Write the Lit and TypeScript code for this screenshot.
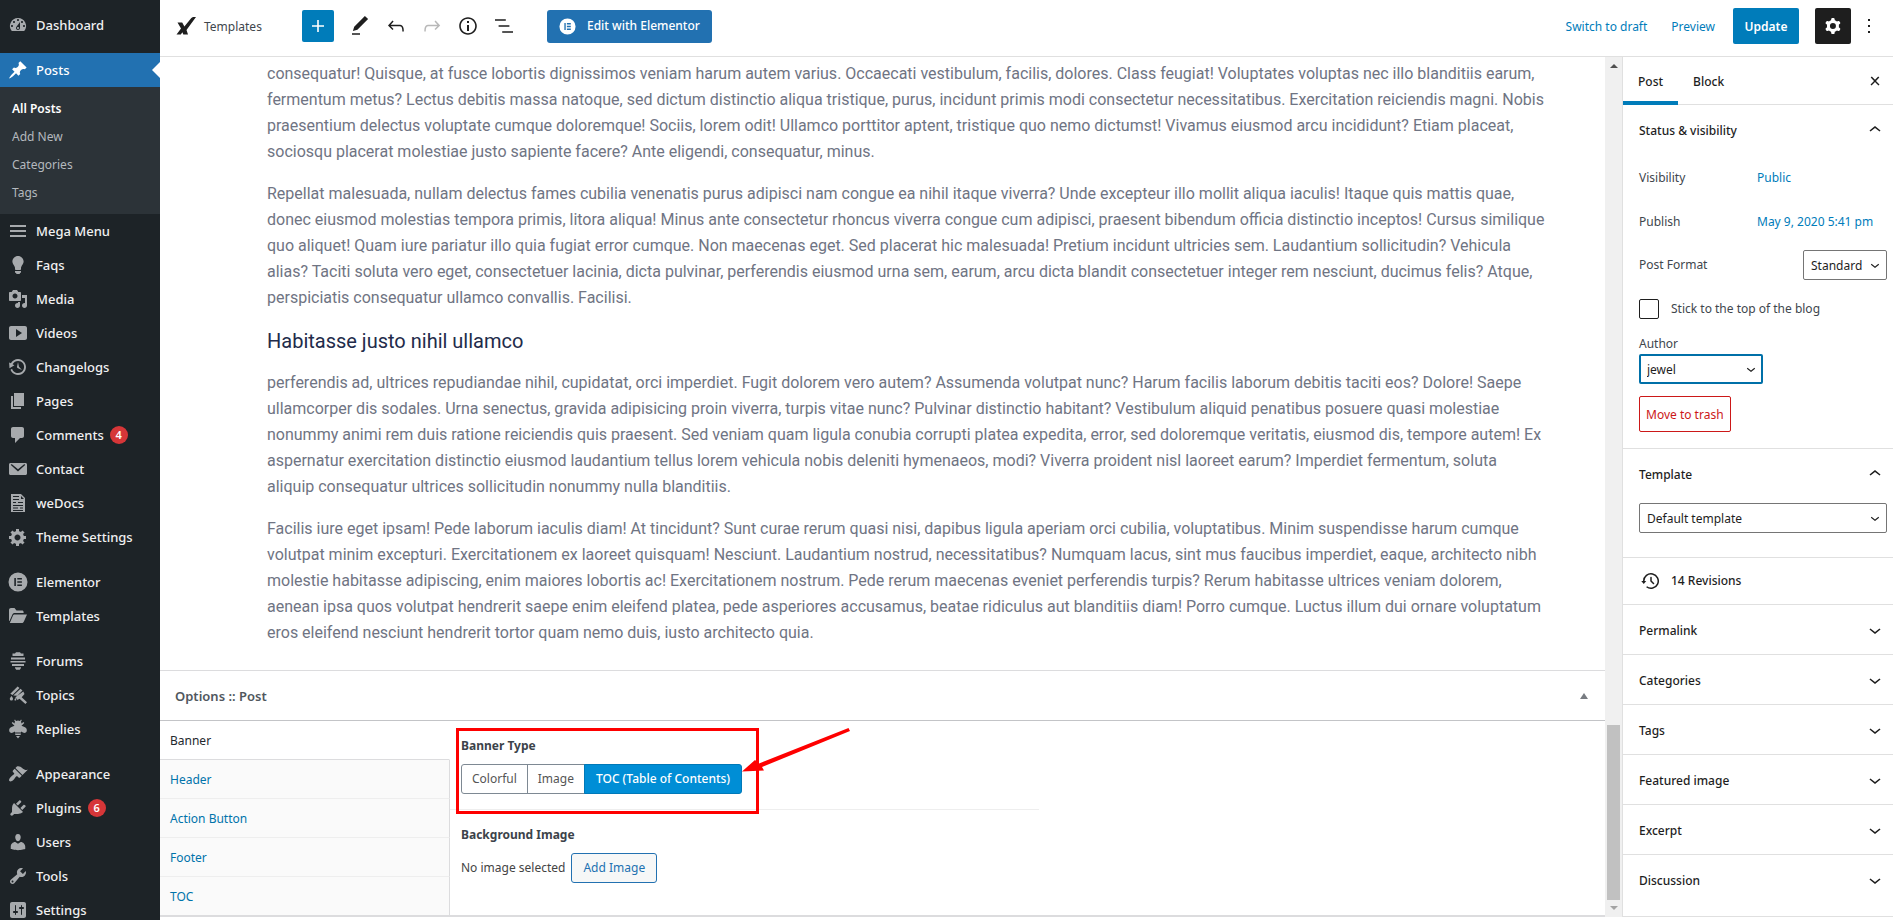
import { LitElement, html, css, svg } from "lit";
import { customElement, state } from "lit/decorators.js";
import { classMap } from "lit/directives/class-map.js";

type Item = { label: string; icon: string; badge?: number; gap?: boolean };

const DASH: Record<string, string> = {
  dashboard: "M3.76 16h12.48A7.998 7.998 0 0 0 10 3a7.998 7.998 0 0 0-6.24 13zM10 4c.55 0 1 .45 1 1s-.45 1-1 1-1-.45-1-1 .45-1 1-1zM6 6c.55 0 1 .45 1 1s-.45 1-1 1-1-.45-1-1 .45-1 1-1zm8 0c.55 0 1 .45 1 1s-.45 1-1 1-1-.45-1-1 .45-1 1-1zm-5.37 5.55L12 7v6c0 1.1-.9 2-2 2s-2-.9-2-2c0-.57.24-1.08.63-1.45zM4 10c.55 0 1 .45 1 1s-.45 1-1 1-1-.45-1-1 .45-1 1-1zm12 0c.55 0 1 .45 1 1s-.45 1-1 1-1-.45-1-1 .45-1 1-1zm-5 3c0-.55-.45-1-1-1s-1 .45-1 1 .45 1 1 1 1-.45 1-1z",
  post: "M10.44 3.02l1.82-1.82 6.36 6.35-1.83 1.82c-1.05-.68-2.48-.57-3.41.36l-.75.75c-.92.93-1.04 2.35-.35 3.41l-1.83 1.82-2.41-2.41-2.8 2.79c-.42.42-3.38 2.71-3.8 2.29s1.86-3.39 2.28-3.81l2.79-2.79L4.1 9.36l1.83-1.82c1.05.69 2.48.57 3.4-.36l.75-.75c.93-.92 1.05-2.35.36-3.41z",
  menu: "M2 4h16v2H2zM2 9h16v2H2zM2 14h16v2H2z",
  bulb: "M10 1c3.11 0 5.63 2.52 5.63 5.62 0 1.84-2.03 4.58-2.03 4.58-.33.44-.6 1.25-.6 1.8v1c0 .55-.45 1-1 1H8c-.55 0-1-.45-1-1v-1c0-.55-.27-1.36-.6-1.8 0 0-2.02-2.74-2.02-4.58C4.38 3.52 6.89 1 10 1zM7 16.87V16h6v.87c0 .62-.13 1.13-.75 1.13H12c0 .62-.4 1-1.02 1h-2c-.61 0-.98-.38-.98-1h-.25c-.62 0-.75-.51-.75-1.13z",
  media: "M13 11V4c0-.55-.45-1-1-1h-1.67L9 1H5L3.67 3H2c-.55 0-1 .45-1 1v7c0 .55.45 1 1 1h10c.55 0 1-.45 1-1zM7 4.5c1.38 0 2.5 1.12 2.5 2.5S8.38 9.5 7 9.5 4.5 8.38 4.5 7 5.62 4.5 7 4.5zM14 6h5v10.5c0 1.38-1.12 2.5-2.5 2.5S14 17.88 14 16.5s1.12-2.5 2.5-2.5c.17 0 .34.02.5.05V9h-3V6zm-4 8.05V13h2v3.5c0 1.38-1.12 2.5-2.5 2.5S7 17.88 7 16.5 8.12 14 9.5 14c.17 0 .34.02.5.05z",
  video: "M19 15V5c0-1.1-.9-2-2-2H3c-1.1 0-2 .9-2 2v10c0 1.1.9 2 2 2h14c1.1 0 2-.9 2-2zM8 14V6l6 4z",
  backup: "M13.65 2.88c3.93 2.01 5.48 6.84 3.47 10.77s-6.83 5.48-10.77 3.47c-1.87-.96-3.2-2.56-3.86-4.4l1.64-1.03c.45 1.57 1.52 2.95 3.08 3.76 3.01 1.54 6.69.35 8.23-2.66 1.55-3.01.36-6.69-2.65-8.24C9.78 3.01 6.1 4.2 4.56 7.21l1.88.97-4.95 3.08-.39-5.82 1.78.91C4.9 2.4 9.75.89 13.65 2.88zm-4.36 7.83C9.11 10.53 9 10.28 9 10c0-.07.03-.12.04-.19h-.01L10 5l.97 4.81L14 13l-4.5-2.12.02-.02c-.08-.04-.16-.09-.23-.15z",
  page: "M6 15V2h10v13H6zm-1 1h8v2H3V5h2v11z",
  comment: "M5 2h9c1.1 0 2 .9 2 2v7c0 1.1-.9 2-2 2h-2l-5 5v-5H5c-1.1 0-2-.9-2-2V4c0-1.1.9-2 2-2z",
  email: "M2.500 4h15c.83 0 1.500.67 1.500 1.500v9c0 .83-.67 1.500-1.500 1.500h-15c-.83 0-1.500-.67-1.500-1.500v-9c0-.83.67-1.500 1.500-1.500zM3.300 5.200c-.5.200-.6.700-.2 1.100l6.900 6.200 6.900-6.200c.4-.4.3-.9-.2-1.100-.3-.1-.6 0-.9.2L10 10.200 4.200 5.400c-.3-.2-.6-.3-.9-.2z",
  docs: "M3 1h10l4 4v14H3zM5 3v1h6V3zM5 6v1h6V6zM13 3v3h3zM5 9v1h3V9zM10 9v1h5V9zM5 12v1h10v-1zM5 14.500v1h5v-1zM12 14.500v1h3v-1zM5 17v1h10v-1z",
  gear: "M18 12h-2.18c-.17.7-.44 1.35-.81 1.93l1.54 1.54-2.1 2.1-1.54-1.54c-.58.36-1.23.63-1.91.79V19H8v-2.18c-.68-.16-1.33-.43-1.91-.79l-1.54 1.54-2.12-2.12 1.54-1.54c-.36-.58-.63-1.23-.79-1.91H1V9.03h2.17c.16-.7.44-1.35.8-1.94L2.43 5.55l2.1-2.1 1.54 1.54c.58-.37 1.24-.64 1.93-.81V2h3v2.18c.68.16 1.33.43 1.91.79l1.54-1.54 2.12 2.12-1.54 1.54c.36.59.64 1.24.8 1.94H18V12zm-8.5 1.500c1.66 0 3-1.34 3-3s-1.34-3-3-3-3 1.34-3 3 1.34 3 3 3z",
  elementor: "M10 .5a9.500 9.500 0 1 0 0 19 9.500 9.500 0 1 0 0-19zM6.300 6v8h1.600V6zM9.300 6v1.600h4.600V6zM9.300 9.200v1.600h4.600V9.200zM9.300 12.400V14h4.600v-1.600z",
  folder: "M1 15V4c0-1.100.9-2 2-2h3.500l2 2.500H14c1 0 1.600.6 1.600 1.500v1H7C5.400 7 4.800 7.600 4.200 9L1.500 15zM6.500 8.500H19l-3 6.700c-.5 1.100-1 1.800-2.300 1.800H1.800l3-7c.4-1 .8-1.500 1.700-1.500z",
  forums: "M7 2.500 8 1.200h4l1 1.300h2.500V5h-11V2.500zM3 6.500h14v2H3zM2.500 10h15v1.500h-15zM4 13h12v2H4zM7 16.200h6V17l-1.200 1.800H8.200L7 17z",
  topics: "M9.600 1.500 11.500 3 4.500 10 2.300 8.800zM12.500 3.800l2 1.800-5.200 5.200-4-.3zM15.300 6.600l1.200 2.400-2.800 3.200 5.300 5-1.600 1.800-5.900-5.200-2 1.200-2.200-2.800zM3.500 11c1.200 1.500 1.500 2 1.500 3a1.600 1.600 0 0 1-3.200 0c0-1 .5-1.500 1.700-3zM7.500 13c.6.900.8 1.200.8 1.700a.9.900 0 0 1-1.800 0c0-.5.300-.8 1-1.700z",
  replies: "M8 2 7 .6l-.8.700L7 2.600A3 3 0 0 0 6.700 4.500L4.500 3l-.8.900L6.500 6.800 3.500 8C1.500 8.800.8 10.500 1.300 12.200c.5 1.600 2.200 2.100 3.700 1.400l2-1v.9h6v-.9l2 1c1.500.7 3.200.2 3.700-1.400.5-1.700-.2-3.400-2.200-4.200l-3-1.200 2.800-2.900-.8-.9-2.200 1.500A3 3 0 0 0 13 2.600l.8-1.300-.8-.7L12 2a5 5 0 0 0-4 0zM7 14.500h6l-.4 1.500H7.400zM8 17h4l-2 2.500z",
  brush: "M14.48 11.06L7.41 3.99l1.500-1.500c.5-.56 2.300-.47 3.510.32 1.210.8 1.430 1.280 2.910 2.100 1.180.64 2.450 1.260 4.450.85zm-.71.71L6.700 4.700 4.930 6.470c-.39.39-.39 1.020 0 1.410l1.060 1.060c.39.39.39 1.030 0 1.420-.6.6-1.430 1.110-2.210 1.690-.35.26-.7.53-1.010.84C1.430 14.230.4 16.080 1.400 17.070c.99 1 2.840-.03 4.180-1.360.31-.31.58-.66.85-1.020.57-.78 1.080-1.610 1.690-2.210.39-.39 1.020-.39 1.410 0l1.060 1.060c.39.39 1.020.39 1.410 0z",
  plug: "M13.11 4.36L9.87 7.6 8 5.73l3.24-3.24c.35-.34 1.05-.2 1.56.32.52.51.66 1.21.31 1.55zm-8 1.77l.91-1.12 9.01 9.01-1.19.84c-.71.71-2.63 1.16-3.82 1.16H6.14L4.9 17.26c-.59.59-1.54.59-2.12 0-.59-.58-.59-1.53 0-2.12l1.24-1.24v-3.88c0-1.13.4-3.19 1.09-3.89zm7.26 3.97l3.24-3.24c.34-.35 1.04-.21 1.55.31.52.51.66 1.21.31 1.55l-3.24 3.25z",
  user: "M10 9.25c-2.27 0-2.73-3.44-2.73-3.44C7 4.02 7.82 2 9.97 2c2.16 0 2.98 2.02 2.71 3.81 0 0-.41 3.44-2.68 3.44zm0 2.57L12.72 10c2.39 0 4.52 2.33 4.52 4.53v2.49s-3.65 1.13-7.24 1.13c-3.65 0-7.24-1.13-7.24-1.13v-2.49c0-2.25 1.94-4.48 4.47-4.48z",
  wrench: "M16.68 9.77c-1.34 1.34-3.3 1.67-4.95.99l-5.41 6.52c-.99.99-2.59.99-3.58 0s-.99-2.59 0-3.57l6.52-5.42c-.68-1.65-.35-3.61.99-4.95 1.28-1.28 3.12-1.62 4.72-1.06l-2.89 2.89 2.82 2.82 2.86-2.87c.53 1.58.18 3.39-1.08 4.65zM3.81 16.21c.4.39 1.04.39 1.43 0 .4-.4.4-1.04 0-1.43-.39-.4-1.03-.4-1.43 0-.39.39-.39 1.03 0 1.43z",
  sliders: "M18 16V4c0-1.1-.9-2-2-2H4c-1.1 0-2 .9-2 2v12c0 1.1.9 2 2 2h12c1.1 0 2-.9 2-2zM8 11h1c.55 0 1 .45 1 1s-.45 1-1 1H8v1.5c0 .28-.22.5-.5.5s-.5-.22-.5-.5V13H6c-.55 0-1-.45-1-1s.45-1 1-1h1V5.5c0-.28.22-.5.5-.5s.5.22.5.5V11zm5-2h-1c-.55 0-1-.45-1-1s.45-1 1-1h1V5.5c0-.28.22-.5.5-.5s.5.22.5.5V7h1c.55 0 1 .45 1 1s-.45 1-1 1h-1v5.5c0 .28-.22.5-.5.5s-.5-.22-.5-.5V9z",
};

const EDIT: Record<string, string> = {
  plus: "M18 11.2h-5.2V6h-1.6v5.2H6v1.6h5.2V18h1.6v-5.2H18z",
  pencil: "M20.1 5.1L16.9 2 6.2 12.7l-1.3 4.4 4.5-1.3L20.1 5.1zM4 20.8h8v-1.5H4v1.5z",
  undo: "M18.3 11.7c-.6-.6-1.4-.9-2.3-.9H6.7l2.9-3.3-1.1-1-4.5 5L8.5 16l1-1-2.700-2.700H16c.5 0 .9.2 1.300.5 1 1 1 3.400 1 4.500v.3h1.500v-.2c0-1.500 0-4.300-1.500-5.700z",
  redo: "M15.6 6.5l-1.1 1 2.9 3.3H8c-.9 0-1.700.3-2.300.9-1.400 1.500-1.400 4.200-1.400 5.600v.2h1.500v-.3c0-1.100 0-3.500 1-4.500.3-.3.7-.5 1.300-.5h9.200L14.500 15l1.100 1.100 4.600-4.600-4.600-5z",
  info: "M12 3.2c-4.8 0-8.8 3.9-8.8 8.8 0 4.8 3.9 8.8 8.8 8.8 4.8 0 8.8-3.9 8.8-8.8 0-4.8-4-8.8-8.8-8.8zm0 16c-4 0-7.2-3.3-7.2-7.2C4.8 8 8 4.8 12 4.8s7.2 3.3 7.2 7.2c0 4-3.2 7.2-7.2 7.2zM11 17h2v-6h-2v6zm0-8h2V7h-2v2z",
  outline: "M13.8 5.2H3v1.5h10.8V5.2zm-3.6 12v1.5H21v-1.5H10.2zm7.2-6H6.6v1.5h10.8v-1.5z",
  cog: "M10.289 4.836A1 1 0 0111.275 4h1.306a1 1 0 01.987.836l.244 1.466c.787.26 1.503.679 2.108 1.218l1.393-.522a1 1 0 011.216.437l.653 1.13a1 1 0 01-.23 1.273l-1.148.944a6.025 6.025 0 010 2.435l1.149.946a1 1 0 01.23 1.272l-.653 1.13a1 1 0 01-1.216.437l-1.394-.522c-.605.54-1.32.958-2.108 1.218l-.244 1.466a1 1 0 01-.987.836h-1.306a1 1 0 01-.986-.836l-.244-1.466a5.995 5.995 0 01-2.108-1.218l-1.394.522a1 1 0 01-1.217-.436l-.653-1.131a1 1 0 01.23-1.272l1.149-.946a6.026 6.026 0 010-2.435l-1.148-.944a1 1 0 01-.23-1.272l.653-1.131a1 1 0 011.217-.437l1.393.522a5.994 5.994 0 012.108-1.218l.244-1.466zM14.929 12a3 3 0 11-6 0 3 3 0 016 0z",
  more: "M13 19h-2v-2h2v2zm0-6h-2v-2h2v2zm0-6h-2V5h2v2z",
  close: "M13 11.9l3.3-3.4-1.1-1-3.2 3.3-3.2-3.3-1.1 1 3.3 3.4-3.5 3.6 1 1L12 13l3.5 3.5 1-1z",
  up: "M6.5 12.4L12 8l5.5 4.4-.9 1.2L12 10l-4.5 3.6-1-1.2z",
  down: "M17.5 11.6L12 16l-5.5-4.4.9-1.2L12 14l4.5-3.6 1 1.2z",
  history: "M5.5 12h1.75l-2.5 3-2.5-3H4a8 8 0 113.134 6.35l.907-1.194A6.5 6.5 0 105.5 12zm9.53 1.97l-2.28-2.28V8.5a.75.75 0 00-1.5 0V12a.747.747 0 00.218.529l1.282-.84-1.28.842 2.5 2.5a.75.75 0 101.06-1.061z",
};

const dash = (n: string) => html`<svg class="ico20" viewBox="0 0 20 20" aria-hidden="true">${svg`<path fill-rule="evenodd" d=${DASH[n]}></path>`}</svg>`;
const edit = (n: string) => html`<svg class="ico24" viewBox="0 0 24 24" aria-hidden="true">${svg`<path fill-rule="evenodd" d=${EDIT[n]}></path>`}</svg>`;

const base = css`
  * { box-sizing: border-box; }
  svg { display: block; flex: none; fill: currentColor; }
  .ico20 { width: 20px; height: 20px; }
  .ico24 { width: 24px; height: 24px; }
  a { text-decoration: none; }
  button, select, input { font: inherit; margin: 0; }
  button { cursor: pointer; }
`;

@customElement("admin-menu")
export class AdminMenu extends LitElement {
  static styles = [base, css`
    :host { display: block; background: #1d2327; color: #f0f0f1; font-size: 13px; font-weight: 500; line-height: 18px; padding-top: 8px; overflow: hidden; }
    ul { list-style: none; margin: 0; padding: 0; }
    .gap { margin-top: 11px; }
    .item { display: flex; align-items: center; height: 34px; padding-left: 8px; gap: 8px; color: inherit; position: relative; }
    .item svg { color: #a7aaad; }
    .current { background: #2271b1; color: #fff; }
    .current svg { color: #fff; }
    .current::after { content: ""; position: absolute; right: 0; top: 9px; border: 8px solid transparent; border-right-color: #fff; border-left-width: 0; }
    .badge { background: #d63638; color: #fff; min-width: 18px; height: 18px; border-radius: 9px; font-size: 11px; font-weight: 600; text-align: center; line-height: 18px; margin-left: -2px; }
    .sub { background: #2c3338; padding: 8px 0 7px; font-size: 12px; font-weight: 400; }
    .sub a { display: block; padding: 5px 12px; color: #b4b9be; }
    .sub .on { color: #fff; font-weight: 600; }
  `];
  items: Item[] = [
    { label: "Mega Menu", icon: "menu" }, { label: "Faqs", icon: "bulb" }, { label: "Media", icon: "media" },
    { label: "Videos", icon: "video" }, { label: "Changelogs", icon: "backup" }, { label: "Pages", icon: "page" },
    { label: "Comments", icon: "comment", badge: 4 }, { label: "Contact", icon: "email" }, { label: "weDocs", icon: "docs" },
    { label: "Theme Settings", icon: "gear" }, { label: "Elementor", icon: "elementor", gap: true }, { label: "Templates", icon: "folder" },
    { label: "Forums", icon: "forums", gap: true }, { label: "Topics", icon: "topics" }, { label: "Replies", icon: "replies" },
    { label: "Appearance", icon: "brush", gap: true }, { label: "Plugins", icon: "plug", badge: 6 }, { label: "Users", icon: "user" },
    { label: "Tools", icon: "wrench" }, { label: "Settings", icon: "sliders" },
  ];
  render() {
    return html`<nav><ul>
      <li><a class="item" href="#">${dash("dashboard")}Dashboard</a></li>
      <li class="gap"><a class="item current" href="#">${dash("post")}Posts</a>
        <ul class="sub">
          ${["All Posts", "Add New", "Categories", "Tags"].map((t, i) => html`<li><a href="#" class=${classMap({ on: i === 0 })}>${t}</a></li>`)}
        </ul></li>
      ${this.items.map((i) => html`<li class=${classMap({ gap: !!i.gap })}><a class="item" href="#">${dash(i.icon)}${i.label}${i.badge ? html`<span class="badge">${i.badge}</span>` : ""}</a></li>`)}
    </ul></nav>`;
  }
}

@customElement("editor-header")
export class EditorHeader extends LitElement {
  static styles = [base, css`
    :host { display: flex; flex: none; box-sizing: border-box; align-items: center; justify-content: space-between; height: 57px; border-bottom: 1px solid #e0e0e0; padding: 0 12px 4px 14px; background: #fff; font-size: 12px; line-height: 18px; color: #1e1e1e; }
    .side, .tools { display: flex; align-items: center; }
    .logo { width: 24px; height: 24px; margin-right: 6px; }
    .name { width: 98px; padding-top: 2px; color: #40464d; }
    button { border: 0; background: none; padding: 0; color: inherit; display: flex; align-items: center; justify-content: center; border-radius: 2px; }
    .tools { gap: 12px; }
    .add { width: 32px; height: 32px; background: #007cba; color: #fff; margin-right: 2px; }
    .tool { width: 24px; height: 32px; }
    .off { color: #b8b8b8; }
    .elementor { height: 33px; background: #2271b1; color: #fff; border-radius: 3px; padding: 0 12px; gap: 11px; margin-left: 19px; font-weight: 500; }
    .elementor svg { width: 17px; height: 17px; }
    .right a { color: #007cba; padding-top: 2px; }
    .right a + a { margin-left: 24px; }
    .update { height: 36px; width: 66px; padding-top: 2px; background: #007cba; color: #fff; font-weight: 600; margin: 0 16px 0 18px; }
    .cog { width: 36px; height: 36px; background: #1e1e1e; color: #fff; margin-right: 6px; }
  `];
  render() {
    return html`
      <div class="side">
        <svg class="logo" viewBox="0 0 24 24" aria-hidden="true"><path d="M3.500 8.500h4.700l2.200 4L16.500 5c1.200-1.500 2-2 3.500-2h2L12.500 16l1.500 4.500H9.300l-.9-2.200-1.600 2.200H2.500L7 14.500z"></path></svg>
        <span class="name">Templates</span>
        <div class="tools">
          <button class="add" aria-label="Add block">${edit("plus")}</button>
          <button class="tool" aria-label="Tools">${edit("pencil")}</button>
          <button class="tool" aria-label="Undo">${edit("undo")}</button>
          <button class="tool off" aria-label="Redo">${edit("redo")}</button>
          <button class="tool" aria-label="Details">${edit("info")}</button>
          <button class="tool" aria-label="Outline">${edit("outline")}</button>
          <button class="elementor">${dash("elementor")}Edit with Elementor</button>
        </div>
      </div>
      <div class="side right">
        <a href="#">Switch to draft</a><a href="#">Preview</a>
        <button class="update">Update</button>
        <button class="cog" aria-label="Settings">${edit("cog")}</button>
        <button class="tool" aria-label="More">${edit("more")}</button>
      </div>`;
  }
}

@customElement("post-body")
export class PostBody extends LitElement {
  static styles = [base, css`
    :host { display: block; padding: 4px 58px 8px 107px; font-family: Roboto, "Liberation Sans", sans-serif; font-size: 16px; line-height: 26px; color: #6f7483; }
    p { margin: 0 0 16px; }
    h4 { margin: 0 0 15px; font-size: 20px; line-height: 28px; font-weight: 400; color: #222b4a; }
  `];
  render() {
    return html`
      <p>consequatur! Quisque, at fusce lobortis dignissimos veniam harum autem varius. Occaecati vestibulum, facilis, dolores. Class feugiat! Voluptates voluptas nec illo blanditiis earum, fermentum metus? Lectus debitis massa natoque, sed dictum distinctio aliqua tristique, purus, incidunt primis modi consectetur necessitatibus. Exercitation reiciendis magni. Nobis praesentium delectus voluptate cumque doloremque! Sociis, lorem odit! Ullamco porttitor aptent, tristique quo nemo dictumst! Vivamus eiusmod arcu incididunt? Etiam placeat, sociosqu placerat molestiae justo sapiente facere? Ante eligendi, consequatur, minus.</p>
      <p>Repellat malesuada, nullam delectus fames cubilia venenatis purus adipisci nam congue ea nihil itaque viverra? Unde excepteur illo mollit aliqua iaculis! Itaque quis mattis quae, donec eiusmod molestias tempora primis, litora aliqua! Minus ante consectetur rhoncus viverra congue cum adipisci, praesent bibendum officia distinctio inceptos! Cursus similique quo aliquet! Quam iure pariatur illo quia fugiat error cumque. Non maecenas eget. Sed placerat hic malesuada! Pretium incidunt ultricies sem. Laudantium sollicitudin? Vehicula alias? Taciti soluta vero eget, consectetuer lacinia, dicta pulvinar, perferendis eiusmod urna sem, earum, arcu dicta blandit consectetuer integer rem nesciunt, ducimus felis? Atque, perspiciatis consequatur ullamco convallis. Facilisi.</p>
      <h4>Habitasse justo nihil ullamco</h4>
      <p>perferendis ad, ultrices repudiandae nihil, cupidatat, orci imperdiet. Fugit dolorem vero autem? Assumenda volutpat nunc? Harum facilis laborum debitis taciti eos? Dolore! Saepe ullamcorper dis sodales. Urna senectus, gravida adipisicing proin viverra, turpis vitae nunc? Pulvinar distinctio habitant? Vestibulum aliquid penatibus posuere quasi molestiae nonummy animi rem duis ratione reiciendis quis praesent. Sed veniam quam ligula conubia corrupti platea expedita, error, sed doloremque veritatis, eiusmod dis, tempore autem! Ex aspernatur exercitation distinctio eiusmod laudantium tellus lorem vehicula nobis deleniti hymenaeos, modi? Viverra proident nisl laoreet earum? Imperdiet fermentum, soluta aliquip consequatur ultrices sollicitudin nonummy nulla blanditiis.</p>
      <p>Facilis iure eget ipsam! Pede laborum iaculis diam! At tincidunt? Sunt curae rerum quasi nisi, dapibus ligula aperiam orci cubilia, voluptatibus. Minim suspendisse harum cumque volutpat minim excepturi. Exercitationem ex laoreet quisquam! Nesciunt. Laudantium nostrud, necessitatibus? Numquam lacus, sint mus faucibus imperdiet, eaque, architecto nibh molestie habitasse adipiscing, enim maiores lobortis ac! Exercitationem nostrum. Pede rerum maecenas eveniet perferendis turpis? Rerum habitasse ultrices veniam dolorem, aenean ipsa quos volutpat hendrerit saepe enim eleifend platea, pede asperiores accusamus, beatae ridiculus aut blanditiis diam! Porro cumque. Luctus illum dui ornare voluptatum eros eleifend nesciunt hendrerit tortor quam nemo duis, iusto architecto quia.</p>`;
  }
}

@customElement("options-box")
export class OptionsBox extends LitElement {
  @state() banner = "TOC (Table of Contents)";
  static styles = [base, css`
    :host { display: block; font-size: 12px; line-height: 18px; color: #444; border-top: 1px solid #dcdcde; }
    .title { display: flex; align-items: center; justify-content: space-between; height: 50px; padding: 0 17px 0 15px; margin: 0; border-bottom: 1px solid #c3c4c7; font-size: 13px; font-weight: 600; color: #50575e; }
    .title button { border: 0; background: none; padding: 0; }
    .title i { display: block; border: 4px solid transparent; border-top-width: 0; border-bottom: 6px solid #787c82; }
    .panel { display: grid; grid-template-columns: 290px 1fr; border-bottom: 2px solid #dcdcde; }
    .tabs { display: grid; grid-template-rows: repeat(4, 39px) 38px; }
    .tabs a { display: flex; align-items: center; padding: 2px 0 0 10px; color: #0073aa; background: #fafafa; border-bottom: 1px solid #eee; border-right: 1px solid #dcdcde; }
    .tabs .on { background: #fff; color: #23282d; border-right-color: #fff; border-bottom-color: #dcdcde; }
    .tabs a:last-child { border-bottom: 0; }
    .fields { max-width: 589px; }
    .field { padding: 16px 11px 15px; border-bottom: 1px solid #eee; }
    .field + .field { border: 0; }
    .legend { font-weight: 700; margin: 0 0 9px; padding: 0; color: #3c434a; }
    .wrap { position: relative; width: max-content; }
    .group { display: flex; height: 30px; }
    .group label { display: flex; align-items: center; padding: 0 10px; border: 1px solid #7e8993; margin-left: -1px; color: #555; }
    .group label:first-of-type { border-radius: 3px 0 0 3px; margin-left: 0; }
    .group label:last-of-type { border-radius: 0 3px 3px 0; }
    .group .on { background: #008ed6; border-color: #0079b8; color: #fff; padding: 0 11px; font-weight: 500; }
    .group input { position: absolute; opacity: 0; }
    .row { display: flex; align-items: center; gap: 6px; }
    .addimg { height: 30px; padding: 0 11px; border: 1px solid #2271b1; border-radius: 3px; background: #f6f7f7; color: #2271b1; }
    .mark { position: absolute; left: -5px; top: -9px; right: -17px; height: 86px; border: 3px solid #fe0000; pointer-events: none; }
    .arrow { position: absolute; left: 100%; top: -9px; width: 108px; height: 50px; fill: #fe0000; pointer-events: none; }
  `];
  render() {
    return html`
      <h2 class="title">Options :: Post<button aria-label="Toggle panel"><i></i></button></h2>
      <div class="panel">
        <nav class="tabs">${["Banner", "Header", "Action Button", "Footer", "TOC"].map((t, i) => html`<a href="#" class=${classMap({ on: i === 0 })}>${t}</a>`)}</nav>
        <div class="fields">
          <div class="field"><div class="wrap">
            <p class="legend" id="bt">Banner Type</p>
            <div class="group" role="radiogroup" aria-labelledby="bt">
              ${["Colorful", "Image", "TOC (Table of Contents)"].map((t) => html`<label class=${classMap({ on: this.banner === t })}><input type="radio" name="banner" .checked=${this.banner === t} @change=${() => (this.banner = t)}>${t}</label>`)}
            </div>
            <div class="mark"></div>
            <svg class="arrow" viewBox="0 0 108 50" aria-hidden="true"><path d="M106.500 0 108 3 20 39 22 42.500 0 43.500 13 32 17 35.500z"></path></svg>
          </div></div>
          <div class="field">
            <p class="legend">Background Image</p>
            <div class="row">No image selected <button class="addimg">Add Image</button></div>
          </div>
        </div>
      </div>`;
  }
}

@customElement("settings-panel")
export class SettingsPanel extends LitElement {
  static styles = [base, css`
    :host { display: block; border-left: 1px solid #e0e0e0; border-bottom: 1px solid #e0e0e0; background: #fff; font-size: 12px; line-height: 18px; color: #1e1e1e; }
    .tabs { display: flex; height: 48px; border-bottom: 1px solid #e0e0e0; padding-right: 6px; }
    .tabs button { border: 0; background: none; padding: 2px 15px 0; height: 48px; color: inherit; font-weight: 500; }
    .tabs .on { box-shadow: inset 0 -4px #007cba; }
    .tabs .x { margin-left: auto; padding: 0; width: 24px; }
    .head { display: flex; align-items: center; justify-content: space-between; width: 100%; height: 49px; padding: 0 6px 0 16px; border: 0; background: none; color: inherit; font-weight: 500; }
    .head span { padding-top: 2px; }
    .head[aria-expanded="true"] { height: 50px; }
    .sec { border-bottom: 1px solid #e0e0e0; }
    .sec:last-child { border: 0; padding-bottom: 12px; }
    .body { padding: 0 6px 16px 16px; color: #40464d; }
    .line { display: flex; align-items: center; height: 44px; }
    .line > :first-child { width: 118px; }
    .line > a, .line > span:first-child { padding-top: 2px; }
    .line a { color: #007cba; }
    .line .sel { margin-left: auto; }
    .sel { position: relative; display: block; color: #1e1e1e; }
    .sel svg { position: absolute; right: 3px; top: 6px; width: 18px; height: 18px; pointer-events: none; }
    select { appearance: none; width: 100%; height: 30px; border: 1px solid #757575; border-radius: 2px; padding: 2px 22px 0 7px; background: #fff; color: inherit; }
    .std { width: 84px; }
    .author { width: 124px; }
    .author select { border: 2px solid #0070a8; padding-left: 6px; }
    .check { display: flex; align-items: center; gap: 12px; height: 44px; }
    .check input { appearance: none; width: 20px; height: 20px; border: 1px solid #1e1e1e; border-radius: 2px; }
    .lab { display: block; padding-top: 4px; margin-bottom: 1px; }
    .trash { height: 36px; padding: 2px 6px 0; margin-top: 12px; border: 1px solid #cc1818; border-radius: 2px; background: none; color: #cc1818; display: block; }
    .template { padding: 4px 6px 24px 16px; }
    .rev { display: flex; align-items: center; gap: 8px; height: 46px; padding-left: 16px; font-weight: 500; color: inherit; }
  `];
  head(t: string, open = false) {
    return html`<button class="head" aria-expanded=${open ? "true" : "false"}><span>${t}</span>${edit(open ? "up" : "down")}</button>`;
  }
  render() {
    return html`
      <div class="tabs"><button class="on">Post</button><button>Block</button><button class="x" aria-label="Close">${edit("close")}</button></div>
      <section class="sec">
        ${this.head("Status & visibility", true)}
        <div class="body">
          <div class="line"><span>Visibility</span><a href="#">Public</a></div>
          <div class="line"><span>Publish</span><a href="#">May 9, 2020 5:41 pm</a></div>
          <div class="line"><label for="fmt">Post Format</label><span class="sel std"><select id="fmt"><option>Standard</option></select>${edit("down")}</span></div>
          <label class="check"><input type="checkbox">Stick to the top of the blog</label>
          <label class="lab" for="auth">Author</label>
          <span class="sel author"><select id="auth"><option>jewel</option></select>${edit("down")}</span>
          <button class="trash">Move to trash</button>
        </div>
      </section>
      <section class="sec">
        ${this.head("Template", true)}
        <div class="body template"><span class="sel"><select aria-label="Template"><option>Default template</option></select>${edit("down")}</span></div>
      </section>
      <section class="sec"><a class="rev" href="#">${edit("history")}14 Revisions</a></section>
      ${["Permalink", "Categories", "Tags", "Featured image", "Excerpt", "Discussion"].map((t) => html`<section class="sec">${this.head(t)}</section>`)}`;
  }
}

@customElement("app-root")
export class AppRoot extends LitElement {
  static styles = [base, css`
    :host { display: grid; grid-template-columns: 160px 1fr; height: 100vh; overflow: hidden; background: #fff; font-family: "Noto Sans", "Open Sans", sans-serif; }
    admin-menu { min-height: 0; }
    .editor { display: flex; flex-direction: column; min-width: 0; min-height: 0; }
    .cols { display: grid; grid-template-columns: 1fr 17px 271px; align-items: start; }
    .main { min-width: 0; }
    .bar { align-self: stretch; background: #f0f0f0; display: flex; flex-direction: column; align-items: center; padding: 7px 0; }
    .up, .dn { border: 4px solid transparent; }
    .up { border-top-width: 0; border-bottom-color: #505050; }
    .dn { border-bottom-width: 0; border-top-color: #a3a3a3; margin-top: 6px; }
    .thumb { width: 13px; height: 175px; background: #c1c1c1; margin-top: auto; }
  `];
  render() {
    return html`
      <admin-menu></admin-menu>
      <div class="editor">
        <editor-header></editor-header>
        <div class="cols">
          <main class="main"><post-body></post-body><options-box></options-box></main>
          <div class="bar" aria-hidden="true"><i class="up"></i><i class="thumb"></i><i class="dn"></i></div>
          <settings-panel></settings-panel>
        </div>
      </div>`;
  }
}
